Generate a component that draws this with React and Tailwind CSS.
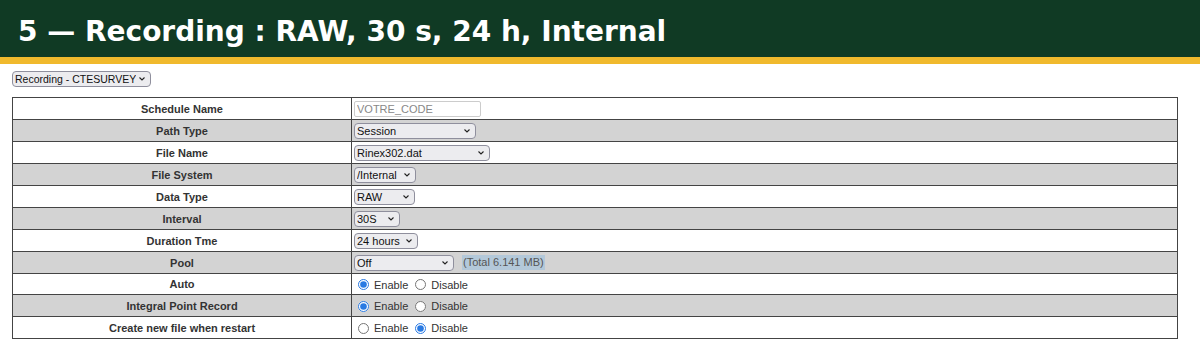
import React from "react";

const rows = [
  { label: "Schedule Name", kind: "input" },
  { label: "Path Type", kind: "select", value: "Session", w: "w-[122px]" },
  { label: "File Name", kind: "select", value: "Rinex302.dat", w: "w-[136px]" },
  { label: "File System", kind: "select", value: "/Internal", w: "w-[62px]" },
  { label: "Data Type", kind: "select", value: "RAW", w: "w-[61px]" },
  { label: "Interval", kind: "select", value: "30S", w: "w-[46px]" },
  { label: "Duration Tme", kind: "select", value: "24 hours", w: "w-[64px]" },
  { label: "Pool", kind: "select", value: "Off", w: "w-[100px]", extra: true },
  { label: "Auto", kind: "radio", enable: true, short: true },
  { label: "Integral Point Record", kind: "radio", enable: true },
  { label: "Create new file when restart", kind: "radio", enable: false },
];

function Sel({ value, w, size = "text-[11px]" }) {
  return (
    <div className={`relative ${w} h-[16px]`}>
      <select
        defaultValue="v"
        className={`appearance-none block w-full h-full pl-[2px] pr-[14px] py-0 ${size} leading-[14px] text-[#111] bg-[#ececef] border border-[#8f8f9d] rounded-[4px] font-['Liberation_Sans',Arial,sans-serif]`}
      >
        <option value="v">{value}</option>
      </select>
      <svg
        className="absolute right-[6px] top-[6px] pointer-events-none"
        width="6"
        height="4"
        viewBox="0 0 6 4"
      >
        <path d="M0.5 0.5 L3 3 L5.5 0.5" fill="none" stroke="#222" strokeWidth="1.1" />
      </svg>
    </div>
  );
}

function Radio({ name, enable }) {
  return (
    <div className="flex items-center h-[16px] text-[11px] text-[#333] pt-[1px]">
      <input type="radio" name={name} defaultChecked={enable} className="m-0 ml-[4px] mr-[5px] w-[11px] h-[11px] accent-[#2a7ae2]" />
      <span>Enable</span>
      <input type="radio" name={name} defaultChecked={!enable} className="m-0 ml-[7px] mr-[5px] w-[11px] h-[11px] accent-[#2a7ae2]" />
      <span>Disable</span>
    </div>
  );
}

export default function App() {
  return (
    <div className="bg-white w-[1200px] h-[354px] font-['Liberation_Sans',Arial,sans-serif]">
      <div className="bg-[#103a24] h-[57px] flex items-center px-[18px]">
        <h1 className="text-white font-bold text-[28px] leading-[34px] font-['DejaVu_Sans',sans-serif] mt-[6px]">
          5 — Recording : RAW, 30 s, 24 h, Internal
        </h1>
      </div>
      <div className="bg-[#f0b92d] h-[7px]" />
      <div className="px-[12px] pt-[7px]">
        <Sel value="Recording - CTESURVEY" w="w-[139px]" size="text-[10.5px]" />
        <table className="mt-[10px] w-[1166px] border-collapse border border-[#444] text-[11px]">
          <tbody>
            {rows.map((r, i) => (
              <tr key={r.label} className={i % 2 === 1 ? "bg-[#d3d3d3]" : "bg-white"}>
                <td className={`w-[339px] ${r.short ? "h-[21px]" : "h-[22px]"} p-0 border border-[#444] text-center font-bold text-[#333] leading-[14px]`}>
                  {r.label}
                </td>
                <td className={`${r.short ? "h-[21px]" : "h-[22px]"} p-0 pl-[2px] border border-[#444] leading-[14px]`}>
                  {r.kind === "input" && (
                    <input
                      type="text"
                      placeholder="VOTRE_CODE"
                      className="block w-[127px] h-[16px] px-[2px] text-[11px] border border-[#ccc] bg-white placeholder:text-[#888] rounded-[2px]"
                    />
                  )}
                  {r.kind === "select" && (
                    <div className="flex items-center">
                      <Sel value={r.value} w={r.w} />
                      {r.extra && (
                        <span className="ml-[8px] px-[1px] leading-[15px] text-[11px] text-[#555] bg-[#b3c8d9]">(Total 6.141 MB)</span>
                      )}
                    </div>
                  )}
                  {r.kind === "radio" && <Radio name={r.label} enable={r.enable} />}
                </td>
              </tr>
            ))}
          </tbody>
        </table>
      </div>
    </div>
  );
}
